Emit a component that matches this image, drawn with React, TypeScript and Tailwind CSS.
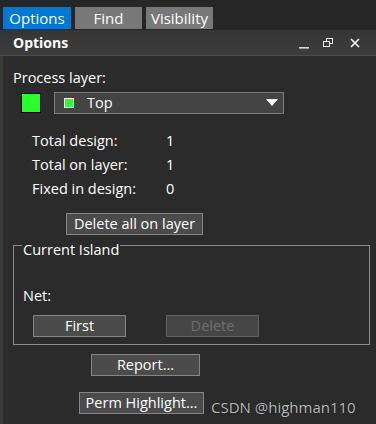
type BtnProps = { label: string; className?: string; disabled?: boolean };

function Btn({ label, className = "", disabled }: BtnProps) {
  return (
    <button
      className={`flex h-[22px] items-center justify-center border text-[14.5px] leading-none ${
        disabled ? "border-[#5e5e5e] bg-[#464646] text-[#6f6f6f]" : "border-[#858585] bg-[#4b4b4b] text-white"
      } ${className}`}
    >
      {label}
    </button>
  );
}

const stats = [
  ["Total design:", "1"],
  ["Total on layer:", "1"],
  ["Fixed in design:", "0"],
];

export default function App() {
  return (
    <div
      className="flex h-[424px] w-[376px] flex-col overflow-hidden bg-[#2b2b2b] text-white"
      style={{ fontFamily: '"Open Sans", "Noto Sans", sans-serif' }}
    >
      {/* tab strip */}
      <div className="flex h-[30px] items-end gap-[4px] bg-[#262626] pb-[1px] pl-[3px]">
        <div className="flex h-[22px] w-[68px] items-center justify-center bg-[#0078d7] text-[15px]">Options</div>
        <div className="flex h-[22px] w-[67px] items-center justify-center bg-[#787878] text-[15px]">Find</div>
        <div className="flex h-[22px] w-[67px] items-center justify-center bg-[#787878] text-[15px]">Visibility</div>
      </div>

      {/* title bar */}
      <div className="flex h-[26px] items-center border-b border-[#4d4d4d] bg-gradient-to-b from-[#353535] to-[#3d3d3d] pl-[13px] pr-[16px]">
        <span className="text-[14px] font-bold">Options</span>
        <div className="ml-auto flex items-center gap-[14px]">
          <svg width="10" height="10" viewBox="0 0 10 10" className="mt-[3px]">
            <rect x="0" y="8" width="10" height="1.6" fill="#d8d8d8" />
          </svg>
          <svg width="10" height="10" viewBox="0 0 10 10">
            <rect x="3.5" y="0.5" width="6" height="5" fill="none" stroke="#e8e8e8" />
            <rect x="0.5" y="3.5" width="6" height="5" fill="#3a3a3a" stroke="#e8e8e8" />
          </svg>
          <svg width="10" height="10" viewBox="0 0 10 10" className="ml-[3px]">
            <path d="M1 1 L9 9 M9 1 L1 9" stroke="#ffffff" strokeWidth="1.6" />
          </svg>
        </div>
      </div>

      {/* body */}
      <div className="flex flex-1 border-l-[3px] border-[#3a3a3a]">
        <div className="flex flex-1 flex-col pl-[10px] pr-[7px] text-[14.5px]">
          <div className="mt-[12px] leading-[20px]">Process layer:</div>

          <div className="mt-[4px] flex items-center">
            <div className="ml-[8px] h-[20px] w-[20px] border border-black bg-[#2bff2b]" />
            <div className="ml-[13px] flex h-[22px] w-[230px] items-center border border-[#7c7c7c] bg-[#444444] pl-[9px] pr-[5px]">
              <div className="h-[10px] w-[10px] border border-white bg-[#2bff2b]" />
              <span className="ml-[13px]">Top</span>
              <svg width="12" height="8" viewBox="0 0 12 8" className="ml-auto">
                <path d="M0 0 L12 0 L6 7 Z" fill="#ffffff" />
              </svg>
            </div>
          </div>

          <div className="mt-[16px] flex flex-col gap-[2px] pl-[19px]">
            {stats.map(([k, v]) => (
              <div key={k} className="flex h-[22px] items-center">
                <span className="w-[134px]">{k}</span>
                <span>{v}</span>
              </div>
            ))}
          </div>

          <Btn label="Delete all on layer" className="ml-[53px] mt-[13px] w-[137px]" />

          {/* group box */}
          <div className="mt-[10px] h-[100px] w-[357px] border border-[#8a8a8a] px-[9px]">
            <div className="-ml-[1px] -mt-[5px] w-fit bg-[#2b2b2b] px-[1px] leading-[18px]">Current Island</div>
            <div className="mt-[27px] leading-[20px]">Net:</div>
            <div className="mt-[9px] flex">
              <Btn label="First" className="ml-[10px] w-[93px]" />
              <Btn label="Delete" disabled className="ml-[40px] w-[93px]" />
            </div>
          </div>

          <Btn label="Report..." className="ml-[78px] mt-[9px] w-[109px]" />

          <div className="mt-[13px] flex items-center">
            <Btn label="Perm Highlight..." className="ml-[66px] w-[125px]" />
            <span className="ml-[7px] mt-[8px] text-[15px] leading-[20px] text-[#bdbdbd]" style={{ textShadow: "0 0 1px #000" }}>
              CSDN @highman110
            </span>
          </div>
        </div>
      </div>
    </div>
  );
}
